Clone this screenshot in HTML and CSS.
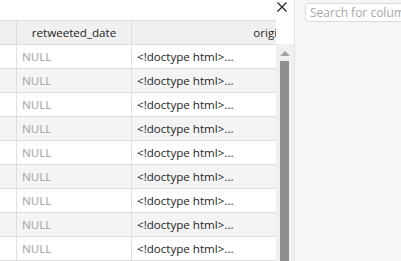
FILE: index.html
```html
<!DOCTYPE html>
<html>
<head>
<meta charset="utf-8">
<link rel="stylesheet" href="styles.css">
</head>
<body>
<div class="app">
  <div class="left">
    <div class="topbar">
      <svg class="close" width="10" height="10" viewBox="0 0 10 10"><path d="M0.5 0.5 L9.5 9.5 M9.5 0.5 L0.5 9.5" stroke="#1a1a1a" stroke-width="1.1" fill="none"/></svg>
    </div>
    <div class="content">
      <div class="table">
        <div class="row head">
          <div class="c c1"></div>
          <div class="c c2">retweeted_date</div>
          <div class="c c3">original_text</div>
        </div>
        <div class="row"><div class="c c1"></div><div class="c c2 null">NULL</div><div class="c c3 val">&lt;!doctype html&gt;...</div></div>
        <div class="row alt"><div class="c c1"></div><div class="c c2 null">NULL</div><div class="c c3 val">&lt;!doctype html&gt;...</div></div>
        <div class="row"><div class="c c1"></div><div class="c c2 null">NULL</div><div class="c c3 val">&lt;!doctype html&gt;...</div></div>
        <div class="row alt"><div class="c c1"></div><div class="c c2 null">NULL</div><div class="c c3 val">&lt;!doctype html&gt;...</div></div>
        <div class="row"><div class="c c1"></div><div class="c c2 null">NULL</div><div class="c c3 val">&lt;!doctype html&gt;...</div></div>
        <div class="row alt"><div class="c c1"></div><div class="c c2 null">NULL</div><div class="c c3 val">&lt;!doctype html&gt;...</div></div>
        <div class="row"><div class="c c1"></div><div class="c c2 null">NULL</div><div class="c c3 val">&lt;!doctype html&gt;...</div></div>
        <div class="row alt"><div class="c c1"></div><div class="c c2 null">NULL</div><div class="c c3 val">&lt;!doctype html&gt;...</div></div>
        <div class="row"><div class="c c1"></div><div class="c c2 null">NULL</div><div class="c c3 val">&lt;!doctype html&gt;...</div></div>
      </div>
      <div class="scroll">
        <div class="scroll-head"></div>
        <div class="track">
          <div class="arrow"></div>
          <div class="thumb"></div>
        </div>
      </div>
    </div>
  </div>
  <div class="right">
    <div class="search">Search for column</div>
  </div>
</div>
</body>
</html>
```
FILE: styles.css
```css
html, body {
  margin: 0;
  padding: 0;
  height: 100%;
  overflow: hidden;
  font-family: "Open Sans", "Noto Sans", sans-serif;
  font-size: 11.6px;
}
.app {
  display: flex;
  height: 261px;
  width: 401px;
}
.left {
  width: 294px;
  flex: none;
  display: flex;
  flex-direction: column;
  background: #fff;
  border-right: 1px solid #e4e4e4;
}
.topbar {
  height: 20px;
  display: flex;
  justify-content: flex-end;
  align-items: flex-start;
}
.close {
  display: block;
  margin: 2px 7px 0 0;
}
.content {
  flex: 1;
  display: flex;
  overflow: hidden;
}
.table {
  width: 276px;
  flex: none;
  overflow: hidden;
}
.row {
  display: flex;
  width: 442px;
  height: 24px;
  border-bottom: 1px solid #dedede;
  box-sizing: border-box;
  background: #fff;
}
.row.alt { background: #f4f4f4; }
.row.head {
  background: #f0f0f0;
  border-top: 1px solid #dedede;
  height: 25px;
}
.c {
  box-sizing: border-box;
  border-right: 1px solid #dedede;
  white-space: nowrap;
  overflow: hidden;
  line-height: 23px;
}
.c1 { width: 17px; }
.c2 { width: 115px; padding-left: 5px; }
.c3 { width: 310px; padding-left: 5px; }
.head .c { text-align: center; padding-left: 0; color: #222; }
.null { color: #a0a0a0; }
.val { color: #1e1e1e; }
.scroll {
  width: 18px;
  flex: none;
  display: flex;
  flex-direction: column;
}
.scroll-head { height: 24px; flex: none; }
.track {
  flex: 1;
  background: #f0f0f0;
  display: flex;
  flex-direction: column;
  align-items: center;
  padding-top: 7px;
}
.arrow {
  width: 0;
  height: 0;
  border-left: 5px solid transparent;
  border-right: 5px solid transparent;
  border-bottom: 5px solid #a3a3a3;
  margin-left: -1px;
}
.thumb {
  width: 9px;
  flex: 1;
  margin-top: 5px;
  margin-left: -1px;
  background: #8f8f8f;
}
.right {
  flex: 1;
  background: #f6f6f6;
  padding: 3px 0 0 10px;
  overflow: hidden;
}
.search {
  height: 19px;
  box-sizing: border-box;
  width: 140px;
  border: 1px solid #dcdcdc;
  border-radius: 3px;
  background: #fff;
  color: #a8a8a8;
  font-size: 12px;
  padding-left: 4px;
  line-height: 17px;
  white-space: nowrap;
  overflow: hidden;
}
```
